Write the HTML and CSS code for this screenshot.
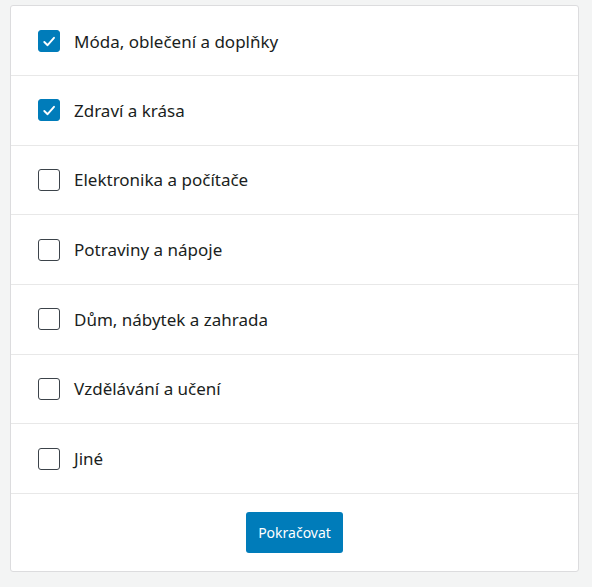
FILE: index.html
```html
<!DOCTYPE html>
<html lang="cs">
<head>
<meta charset="utf-8">
<link rel="stylesheet" href="styles.css">
</head>
<body>
<div class="card">
  <ul class="options">
    <li class="option"><span class="box checked"><svg viewBox="0 0 22 22" width="22" height="22"><path d="M6.3 12 L9.6 15.2 L16 7.8" fill="none" stroke="#fff" stroke-width="1.9" stroke-linecap="round" stroke-linejoin="round"/></svg></span><span class="label">Móda, oblečení a doplňky</span></li>
    <li class="option"><span class="box checked"><svg viewBox="0 0 22 22" width="22" height="22"><path d="M6.3 12 L9.6 15.2 L16 7.8" fill="none" stroke="#fff" stroke-width="1.9" stroke-linecap="round" stroke-linejoin="round"/></svg></span><span class="label">Zdraví a krása</span></li>
    <li class="option"><span class="box"></span><span class="label">Elektronika a počítače</span></li>
    <li class="option"><span class="box"></span><span class="label">Potraviny a nápoje</span></li>
    <li class="option"><span class="box"></span><span class="label">Dům, nábytek a zahrada</span></li>
    <li class="option"><span class="box"></span><span class="label">Vzdělávání a učení</span></li>
    <li class="option"><span class="box"></span><span class="label">Jiné</span></li>
  </ul>
  <div class="footer">
    <button class="btn">Pokračovat</button>
  </div>
</div>
</body>
</html>
```

FILE: styles.css
```css
html, body {
  margin: 0;
  padding: 0;
  background: #f3f4f4;
}
body {
  padding: 5px 13px 15px 10px;
  font-family: "Noto Sans", "Open Sans", sans-serif;
}
.card {
  background: #fff;
  border: 1px solid #dcdcde;
  border-radius: 3px;
  box-sizing: border-box;
  width: 569px;
  height: 567px;
  display: flex;
  flex-direction: column;
}
.options {
  list-style: none;
  margin: 0;
  padding: 0;
}
.option {
  display: flex;
  align-items: center;
  gap: 14px;
  height: 69.67px;
  box-sizing: border-box;
  padding: 0 27px;
  border-bottom: 1px solid #e8e8e8;
}
.option:first-child { height: 70px; padding-top: 1px; }
.box {
  width: 22px;
  height: 22px;
  box-sizing: border-box;
  border: 1px solid #3c434a;
  border-radius: 3px;
  background: #fff;
  flex: none;
  display: flex;
}
.box.checked {
  background: #007cba;
  border-color: #007cba;
}
.box svg { margin: -1px; }
.label {
  font-size: 17px;
  color: #1a1e21;
  line-height: 22px;
  padding-top: 1px;
}
.footer {
  display: flex;
  justify-content: center;
  padding-top: 18px;
}
.btn {
  font-family: "Noto Sans", "Open Sans", sans-serif;
  width: 97px;
  height: 41px;
  border: 0;
  border-radius: 3px;
  background: #007cba;
  color: #fff;
  font-size: 14px;
  padding: 0;
}
```
